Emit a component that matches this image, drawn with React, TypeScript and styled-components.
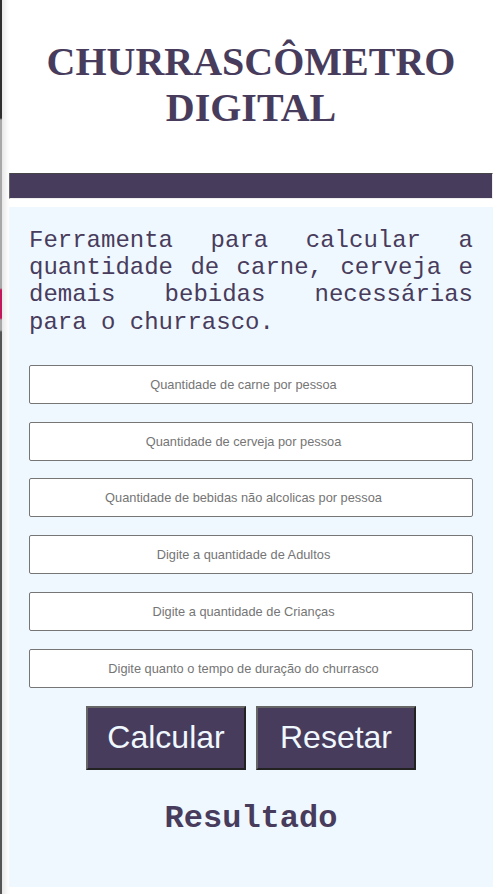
import React from "react";
import styled, { createGlobalStyle } from "styled-components";

const PURPLE = "#483c5c";
const ALICE = "#f0f8ff";

const GlobalStyle = createGlobalStyle`
  html, body {
    margin: 0;
    padding: 0;
    background: #ffffff;
  }
  * { box-sizing: border-box; }
`;

const EdgeShade = styled.div`
  position: fixed;
  top: 0;
  left: 0;
  bottom: 0;
  width: 10px;
  pointer-events: none;
  background: linear-gradient(to right, #d9d9d9 0px, #ececec 3px, #f8f8f8 7px, rgba(255,255,255,0) 10px);
`;

const EdgeLine = styled.div`
  position: fixed;
  top: 0;
  left: 0;
  bottom: 0;
  width: 2px;
  pointer-events: none;
  background: linear-gradient(
    to bottom,
    #2e2e2e 0px,
    #2e2e2e 118px,
    #a8a8a8 120px,
    #a8a8a8 288px,
    #c2185b 290px,
    #c2185b 318px,
    #a8a8a8 320px,
    #a8a8a8 330px,
    #555555 332px,
    #555555 100%
  );
`;

const Page = styled.div`
  margin: 0 8px 0 9px;
  padding-bottom: 7px;
`;

const Header = styled.header`
  padding-top: 39px;
  padding-bottom: 42px;
  text-align: center;
`;

const Title = styled.h1`
  margin: 0;
  font-family: "Liberation Serif", "Times New Roman", serif;
  font-weight: 700;
  font-size: 40px;
  line-height: 46px;
  color: ${PURPLE};
`;

const Divider = styled.hr`
  display: block;
  margin: 0 0 8px;
  height: 26px;
  border: 1px inset #9a9a9a;
  border-color: #9a9a9a #eeeeee #eeeeee #9a9a9a;
  background: ${PURPLE};
`;

const Main = styled.main`
  background: ${ALICE};
  padding: 20px 20px 50px;
  display: flex;
  flex-direction: column;
`;

const Intro = styled.p`
  margin: 0 0 29px;
  font-family: "Liberation Mono", "Courier New", monospace;
  font-size: 24px;
  line-height: 27.2px;
  text-align: justify;
  color: ${PURPLE};
`;

const Form = styled.form`
  display: flex;
  flex-direction: column;
  gap: 17.8px;
`;

const Field = styled.input`
  width: 100%;
  height: 39px;
  padding: 1px 15px 1px 0;
  border: 1px solid #767676;
  border-radius: 2px;
  background: #ffffff;
  font-family: "Liberation Sans", Arial, sans-serif;
  font-size: 12.8px;
  text-align: center;
  color: #222;
  &::placeholder {
    color: #757575;
  }
`;

const Actions = styled.div`
  display: flex;
  justify-content: center;
  gap: 10px;
`;

const Button = styled.button`
  width: 160px;
  height: 64px;
  padding: 0;
  background: ${PURPLE};
  color: ${ALICE};
  border: 2px solid;
  border-color: #666666 #222222 #222222 #666666;
  font-family: "Liberation Sans", Arial, sans-serif;
  font-size: 32px;
  cursor: pointer;
`;

const ResultTitle = styled.h2`
  margin: 31px 0 0;
  text-align: center;
  font-family: "Liberation Mono", "Courier New", monospace;
  font-weight: 700;
  font-size: 32px;
  line-height: 36.25px;
  color: ${PURPLE};
`;

const fields = [
  "Quantidade de carne por pessoa",
  "Quantidade de cerveja por pessoa",
  "Quantidade de bebidas não alcolicas por pessoa",
  "Digite a quantidade de Adultos",
  "Digite a quantidade de Crianças",
  "Digite quanto o tempo de duração do churrasco",
];

export default function App() {
  return (
    <>
      <GlobalStyle />
      <EdgeShade />
      <EdgeLine />
      <Page>
        <Header>
          <Title>
            CHURRASCÔMETRO
            <br />
            DIGITAL
          </Title>
        </Header>
        <Divider />
        <Main>
          <Intro>
            Ferramenta para calcular a quantidade de carne, cerveja e demais
            bebidas necessárias para o churrasco.
          </Intro>
          <Form onSubmit={(e) => e.preventDefault()}>
            {fields.map((f) => (
              <Field key={f} type="text" placeholder={f} />
            ))}
            <Actions>
              <Button type="submit">Calcular</Button>
              <Button type="reset">Resetar</Button>
            </Actions>
          </Form>
          <ResultTitle>Resultado</ResultTitle>
        </Main>
      </Page>
    </>
  );
}
